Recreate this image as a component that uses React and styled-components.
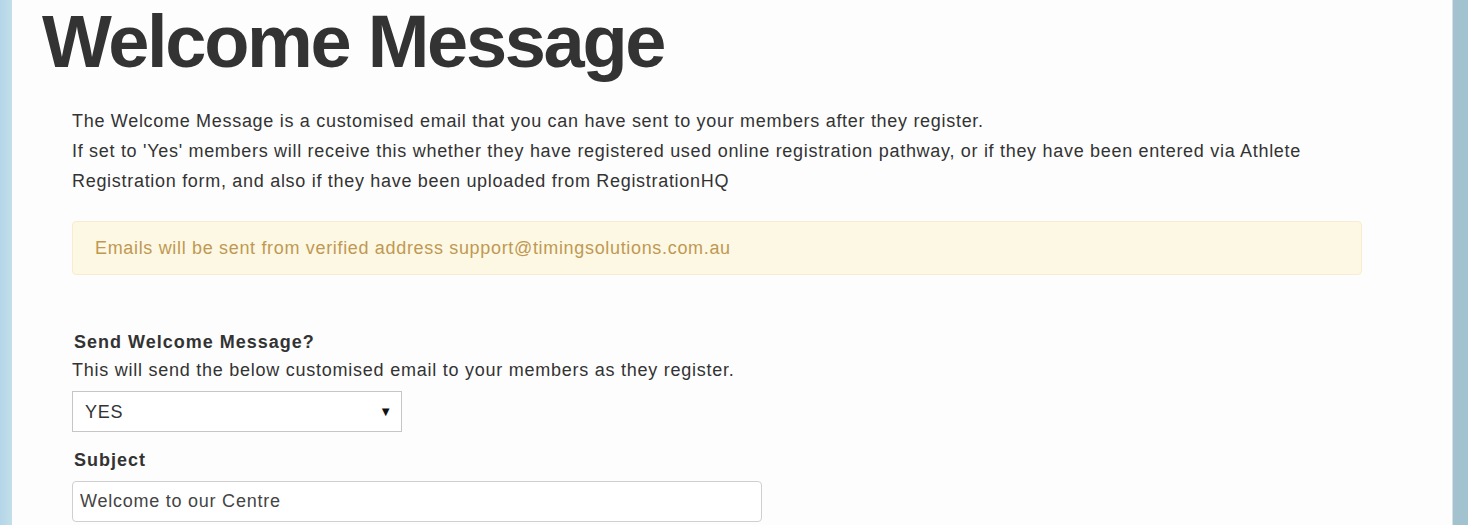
import React from "react";
import styled, { createGlobalStyle } from "styled-components";

const GlobalStyle = createGlobalStyle`
  html, body {
    margin: 0;
    padding: 0;
    background: #b9d8e6;
  }
  body {
    font-family: "Liberation Sans", Arial, sans-serif;
    color: #333;
  }
`;

const Frame = styled.div`
  display: flex;
  min-height: 525px;
  background: linear-gradient(90deg, #b4d6e8 0, #c2deea 11px);
`;

const Panel = styled.main`
  flex: 1;
  margin-left: 12px;
  background: #fdfdfd;
  border-right: 1px solid #d6dfe3;
  padding: 1px 30px 0 30px;
  box-sizing: border-box;
  overflow: hidden;
`;

const RightEdge = styled.div`
  width: 15px;
  background: #a3c2cf;
`;

const Title = styled.h1`
  margin: 0;
  font-size: 74px;
  line-height: 81px;
  font-weight: 700;
  letter-spacing: -2.3px;
  color: #333;
`;

const Body = styled.section`
  padding: 0 60px 0 30px;
`;

const Intro = styled.p`
  margin: 24px 0 0;
  font-size: 18px;
  line-height: 30px;
  letter-spacing: 0.7px;
  color: #333;
`;

const Alert = styled.div`
  margin-top: 25px;
  height: 54px;
  box-sizing: border-box;
  display: flex;
  align-items: center;
  padding: 0 22px;
  background: #fcf8e3;
  border: 1px solid #f8ecd0;
  border-radius: 4px;
  color: #c09853;
  font-size: 18px;
  letter-spacing: 0.67px;
`;

const Form = styled.div`
  margin-top: 54px;
  display: flex;
  flex-direction: column;
`;

const Label = styled.label`
  display: block;
  padding-left: 2px;
  font-weight: 700;
  font-size: 18px;
  line-height: 26px;
  letter-spacing: 1px;
  color: #333;
  margin-top: ${({ $gap }) => $gap || 0}px;
`;

const Help = styled.div`
  font-size: 18px;
  line-height: 24px;
  letter-spacing: 0.75px;
  color: #333;
  margin-top: 3px;
`;

const SelectWrap = styled.div`
  position: relative;
  width: 330px;
  margin-top: 9px;
`;

const Select = styled.select`
  appearance: none;
  width: 100%;
  height: 41px;
  box-sizing: border-box;
  padding: 0 12px;
  border: 1px solid #c6c6c6;
  border-radius: 0;
  background: #fff;
  font-family: "Liberation Sans", Arial, sans-serif;
  font-size: 18px;
  letter-spacing: 0.75px;
  color: #333;
`;

const Caret = styled.span`
  position: absolute;
  right: 10px;
  top: 13px;
  font-size: 13px;
  color: #111;
  pointer-events: none;
`;

const Input = styled.input`
  width: 690px;
  height: 41px;
  box-sizing: border-box;
  margin-top: 8px;
  padding: 0 7px;
  border: 1px solid #cfcfcf;
  border-radius: 4px;
  background: #fff;
  font-family: "Liberation Sans", Arial, sans-serif;
  font-size: 18px;
  letter-spacing: 0.76px;
  color: #444;
`;

const App = () => (
  <>
    <GlobalStyle />
    <Frame>
      <Panel>
        <Title>Welcome Message</Title>
        <Body>
          <Intro>
            The Welcome Message is a customised email that you can have sent
            to your members after they register.
            <br />
            If set to 'Yes' members will receive this whether they have
            registered used online registration pathway, or if they have been
            entered via Athlete
            <br />
            Registration form, and also if they have been uploaded from
            RegistrationHQ
          </Intro>
          <Alert>
            Emails will be sent from verified address
            support@timingsolutions.com.au
          </Alert>
          <Form>
            <Label>Send Welcome Message?</Label>
            <Help>
              This will send the below customised email to your members as
              they register.
            </Help>
            <SelectWrap>
              <Select defaultValue="YES">
                <option>YES</option>
                <option>NO</option>
              </Select>
              <Caret>▼</Caret>
            </SelectWrap>
            <Label $gap={15}>Subject</Label>
            <Input defaultValue="Welcome to our Centre" />
          </Form>
        </Body>
      </Panel>
      <RightEdge />
    </Frame>
  </>
);

export default App;
